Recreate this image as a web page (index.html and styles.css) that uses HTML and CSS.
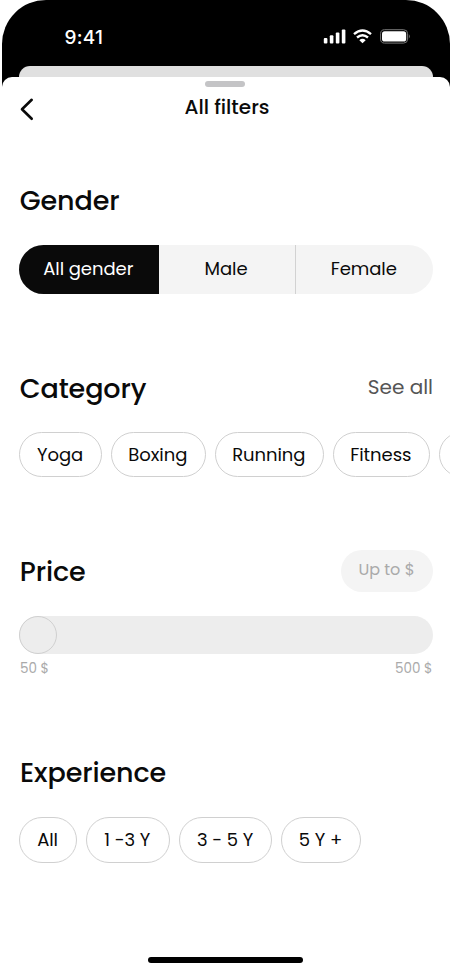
FILE: index.html
```html
<!DOCTYPE html>
<html lang="en">
<head>
<meta charset="utf-8">
<title>All filters</title>
<link rel="stylesheet" href="styles.css">
</head>
<body>
<div class="phone">
  <header class="status">
    <span class="time">9:41</span>
    <svg class="indicators" width="90" height="18" viewBox="0 0 90 18">
      <g fill="#fff">
        <rect x="3.8" y="10" width="3.6" height="5.4" rx="1"/>
        <rect x="9.8" y="7.3" width="3.6" height="8.1" rx="1"/>
        <rect x="15.8" y="4.4" width="3.6" height="11" rx="1"/>
        <rect x="21.8" y="1.6" width="3.6" height="13.8" rx="1"/>
        <path d="M42.5 15.300 39.300 12.200Q42.500 9.500 45.700 12.200Z"/>
      </g>
      <g fill="none" stroke="#fff" stroke-width="2.400">
        <path d="M34 6.2Q42.500 -1 51 6.200"/>
        <path d="M37 9.500Q42.500 4.900 48 9.500"/>
      </g>
      <rect x="60.600" y="1.700" width="27" height="13.400" rx="4" fill="none" stroke="#777" stroke-width="1"/>
      <rect x="62" y="3.200" width="24.200" height="10.400" rx="2.700" fill="#fff"/>
      <path d="M88.900 6.200Q90.600 8.400 88.900 10.600Z" fill="#777"/>
    </svg>
  </header>
  <div class="card-behind"></div>
  <main class="sheet">
    <div class="grabber"></div>
    <div class="nav">
      <svg class="back" width="16" height="24" viewBox="0 0 16 24"><path d="M12.700 2.800 3 12.300l9.700 9.500" fill="none" stroke="#0a0a0a" stroke-width="2.600" stroke-linecap="round" stroke-linejoin="round"/></svg>
      <h1>All filters</h1>
    </div>

    <section class="gender">
      <h2>Gender</h2>
      <div class="segments">
        <span class="segment active">All gender</span>
        <span class="segment male">Male</span>
        <span class="segment female">Female</span>
      </div>
    </section>

    <section class="category">
      <div class="head"><h2>Category</h2><a class="see-all">See all</a></div>
      <div class="chips">
        <span class="chip yoga">Yoga</span>
        <span class="chip boxing">Boxing</span>
        <span class="chip running">Running</span>
        <span class="chip fitness">Fitness</span>
        <span class="chip more"></span>
      </div>
    </section>

    <section class="price">
      <div class="head"><h2>Price</h2><span class="limit">Up to $</span></div>
      <div class="slider"><div class="knob"></div></div>
      <div class="range"><span>50 $</span><span>500 $</span></div>
    </section>

    <section class="experience">
      <h2>Experience</h2>
      <div class="chips">
        <span class="chip all">All</span>
        <span class="chip y1">1 -3 Y</span>
        <span class="chip y3">3 - 5 Y</span>
        <span class="chip y5">5 Y +</span>
      </div>
    </section>
    <div class="home-bar"></div>
  </main>
</div>
</body>
</html>
```
FILE: styles.css
```css
* { box-sizing: border-box; margin: 0; padding: 0; }
body { background: #fff; color: #0a0a0a; font-family: Poppins, Inter, sans-serif; overflow: hidden; }
.phone {
  width: 448.500px; height: 972px; margin-left: 1.500px;
  background: linear-gradient(#000 100px, #fff 100px);
  border-radius: 44px 44px 0 0;
  display: flex; flex-direction: column;
}
.status { height: 66px; flex: none; display: flex; justify-content: space-between; padding: 28px 40px 0 63px; color: #fff; }
.time { font: 500 19px/20px Inter, sans-serif; letter-spacing: 0.300px; }
.card-behind { height: 11px; flex: none; margin: 0 17.500px 0 17.500px; background: #e0e0e0; border-radius: 11px 11px 0 0; }
.sheet { flex: 1; background: #fff; border-radius: 10px 10px 0 0; padding: 4px 0 0 17.500px; overflow: hidden; }
.grabber { width: 40px; height: 6px; margin-left: 186px; background: #c4c4c6; border-radius: 3px; }
.nav { display: flex; height: 42px; margin-top: 1px; padding-top: 9px; }
.back { flex: none; }
h1 { font-size: 20px; line-height: 24px; font-weight: 500; width: 382px; padding-left: 2px; text-align: center; margin-top: -2px; }
h2 { font-size: 27px; line-height: 34px; font-weight: 500; white-space: nowrap; letter-spacing: -0.100px; padding-left: 0.700px; }
.head { display: flex; justify-content: space-between; width: 414px; }

.gender { height: 187px; padding-top: 54px; }
.segments { display: flex; width: 414px; height: 49px; margin-top: 26.500px; background: #f4f4f4; border-radius: 24.500px; overflow: hidden; }
.segment { display: flex; align-items: center; justify-content: center; font-size: 18px; letter-spacing: -0.060px; padding-bottom: 1px; }
.segment.active { width: 139.500px; padding-right: 1px; background: #0a0a0a; color: #fff; }
.male { width: 137px; padding-right: 1px; border-right: 1px solid #d2d2d2; }
.female { flex: 1; padding-right: 1px; }

.category { height: 180px; padding-top: 55px; }
.see-all { font-size: 20px; line-height: 30px; color: #555; }
.chips { display: flex; gap: 9px; padding-left: 0.300px; }
.chip { flex: none; height: 44.500px; padding-right: 1px; border: 1px solid #d0d0d0; border-radius: 23px; display: flex; align-items: center; justify-content: center; font-size: 18px; letter-spacing: -0.060px; white-space: pre; }
.category .chips { margin-top: 26px; }
.yoga { width: 82.500px; }
.boxing { width: 95px; }
.running { width: 109px; }
.fitness { width: 97px; }
.more { width: 90px; }

.price { height: 178px; padding-top: 52.500px; }
.price h2 { padding-top: 5px; }
.limit { width: 92px; height: 42px; padding-right: 1px; background: #f4f4f4; border-radius: 21px; color: #aaa; font-size: 16px; line-height: 40px; text-align: center; }
.slider { width: 414px; height: 38px; margin-top: 24.500px; background: #ededed; border-radius: 19px; }
.knob { width: 38px; height: 38px; border: 1px solid #d0d0d0; border-radius: 50%; }
.range { display: flex; justify-content: space-between; width: 413.500px; padding: 5px 0 0 1px; color: #aaa; font-size: 13.500px; line-height: 19px; }

.experience { height: 278px; padding-top: 81px; }
.experience h2 { padding-left: 1px; }
.experience .chips { margin-top: 27px; }
.experience .chip { height: 45.500px; }
.all { width: 57.500px; }
.y1 { width: 84px; }
.y3 { width: 93.500px; }
.y5 { width: 79.500px; }
.home-bar { width: 155px; height: 6px; margin: 4px 0 0 128.500px; background: #000; border-radius: 3px; }
```
